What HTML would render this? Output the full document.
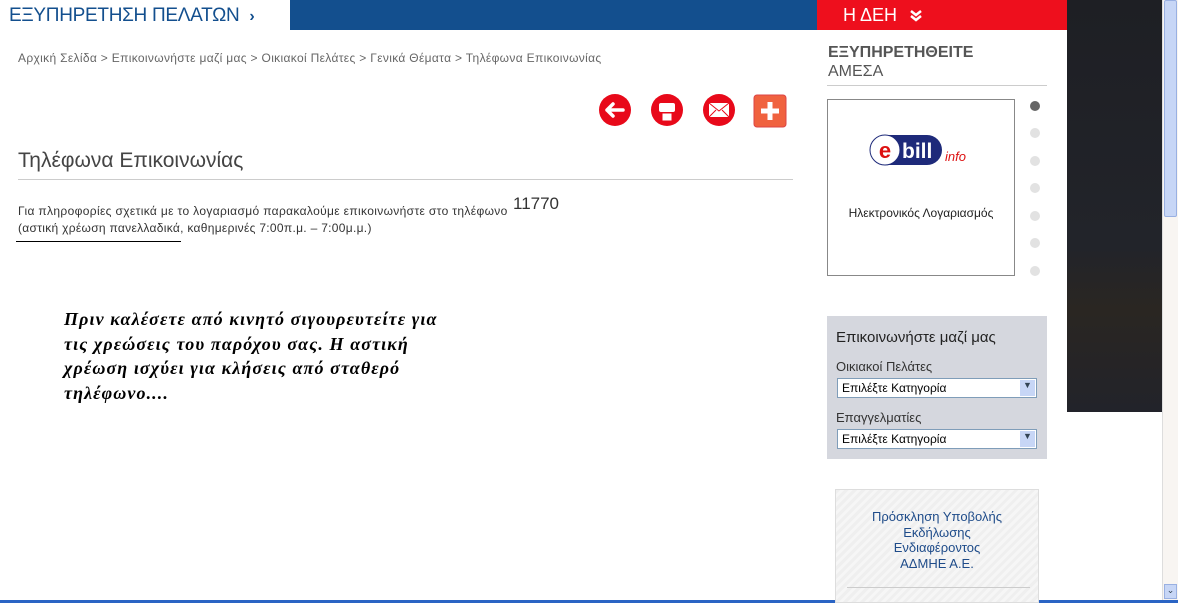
<!DOCTYPE html>
<html><head><meta charset="utf-8"><style>
*{margin:0;padding:0;box-sizing:border-box}
body{width:1178px;height:603px;overflow:hidden;background:#fff;font-family:"Liberation Sans","DejaVu Sans",sans-serif;position:relative}
.a{position:absolute;white-space:nowrap}
</style></head><body>
<div class="a" style="left:9px;top:5px;font-size:19px;color:#134f8e;letter-spacing:-0.3px">ΕΞΥΠΗΡΕΤΗΣΗ ΠΕΛΑΤΩΝ &nbsp;<b style="font-size:16px">›</b></div>
<div class="a" style="left:290px;top:0;width:527px;height:30px;background:#134f8e"></div>
<div class="a" style="left:817px;top:0;width:250px;height:30px;background:#ee0f1d"></div>
<div class="a" style="left:843px;top:5px;font-size:18px;color:#fff">Η ΔΕΗ</div>
<svg class="a" style="left:909px;top:9px" width="14" height="14"><path d="M2 2l5 4 5-4M2 7l5 4 5-4" stroke="#fff" stroke-width="2.5" fill="none"/></svg>
<div class="a" style="left:1067px;top:0;width:95px;height:412px;background:linear-gradient(180deg,#1e1f24 0%,#22242a 60%,#2a2622 75%,#22232a 100%)"></div>
<div class="a" style="left:1162px;top:0;width:16px;height:603px;background:#f8f5f2;border-left:1px solid #ddd"></div>
<div class="a" style="left:1164px;top:0;width:13px;height:217px;background:#c7d6f6;border:1px solid #99b0e2;border-radius:2px"></div>
<div class="a" style="left:1164px;top:584px;width:13px;height:15px;background:#c7d6f6;border:1px solid #99b0e2;font-size:9px;color:#345;text-align:center">⌄</div>
<div class="a" style="left:0;top:600px;width:1178px;height:3px;background:#2a64c4"></div>

<div class="a" style="left:18px;top:51px;font-size:12px;color:#666;letter-spacing:0.33px">Αρχική Σελίδα &gt; Επικοινωνήστε μαζί μας &gt; Οικιακοί Πελάτες &gt; Γενικά Θέματα &gt; Τηλέφωνα Επικοινωνίας</div>

<svg class="a" style="left:598px;top:93px" width="190" height="36">
<circle cx="17" cy="17" r="16" fill="#e8091a"/><path d="M9 17h16M9 17l6-6M9 17l6 6" stroke="#fff" stroke-width="3.5" fill="none" stroke-linecap="round"/>
<circle cx="69" cy="17" r="16" fill="#e8091a"/><rect x="61" y="10" width="16" height="9" rx="2" fill="#fff"/><rect x="64" y="20" width="10" height="8" fill="#fff" stroke="#e8091a"/>
<circle cx="121" cy="17" r="16" fill="#e8091a"/><rect x="111" y="10" width="20" height="14" fill="#fff"/><path d="M111 10l10 8 10-8M111 24l7-7M131 24l-7-7" stroke="#e8091a" fill="none"/>
<rect x="156" y="2" width="32" height="32" rx="3" fill="#f0623f" stroke="#d44"/><path d="M172 9v18M163 18h18" stroke="#fff" stroke-width="5"/>
</svg>

<div class="a" style="left:18px;top:149px;font-size:21px;color:#444">Τηλέφωνα Επικοινωνίας</div>
<div class="a" style="left:18px;top:179px;width:775px;height:1px;background:#ccc"></div>
<div class="a" style="left:18px;top:204px;font-size:12px;color:#333;letter-spacing:0.35px">Για πληροφορίες σχετικά με το λογαριασμό παρακαλούμε επικοινωνήστε στο τηλέφωνο</div>
<div class="a" style="left:513px;top:194px;font-size:17px;color:#333">11770</div>
<div class="a" style="left:18px;top:221px;font-size:12px;color:#333;letter-spacing:0.3px">(αστική χρέωση πανελλαδικά, καθημερινές 7:00π.μ. – 7:00μ.μ.)</div>
<div class="a" style="left:16px;top:241px;width:165px;height:1px;background:#000"></div>

<div class="a" style="left:64px;top:307px;font-family:'Liberation Serif',serif;font-style:italic;font-weight:bold;font-size:18px;letter-spacing:1.1px;line-height:24.5px;color:#000">Πριν καλέσετε από κινητό σιγουρευτείτε για<br>τις χρεώσεις του παρόχου σας. Η αστική<br>χρέωση ισχύει για κλήσεις από σταθερό<br>τηλέφωνο....</div>

<div class="a" style="left:828px;top:43px;font-size:16px;font-weight:bold;color:#555;line-height:19px">ΕΞΥΠΗΡΕΤΗΘΕΙΤΕ<br><span style="font-weight:normal">ΑΜΕΣΑ</span></div>
<div class="a" style="left:827px;top:85px;width:220px;height:1px;background:#ccc"></div>
<div class="a" style="left:827px;top:99px;width:188px;height:177px;border:1px solid #888"></div>
<svg class="a" style="left:868px;top:133px" width="110" height="36">
<rect x="2" y="2" width="72" height="30" rx="15" fill="#1e2a7a"/><circle cx="17" cy="17" r="15" fill="#fff" stroke="#1e2a7a"/>
<text x="17" y="25" font-size="22" font-weight="bold" fill="#d11" text-anchor="middle" font-family="Liberation Sans">e</text>
<text x="34" y="25" font-size="21" font-weight="bold" fill="#fff" font-family="Liberation Sans">bill</text>
<text x="77" y="28" font-size="13" font-style="italic" fill="#d11" font-family="Liberation Sans">info</text>
</svg>
<div class="a" style="left:828px;top:206px;width:186px;text-align:center;font-size:12px;color:#222">Ηλεκτρονικός Λογαριασμός</div>
<div class="a" style="left:1030px;top:101px;width:10px;height:10px;border-radius:50%;background:#666"></div>
<div class="a" style="left:1030px;top:128px;width:10px;height:10px;border-radius:50%;background:#e2e2e2"></div>
<div class="a" style="left:1030px;top:156px;width:10px;height:10px;border-radius:50%;background:#e2e2e2"></div>
<div class="a" style="left:1030px;top:183px;width:10px;height:10px;border-radius:50%;background:#e2e2e2"></div>
<div class="a" style="left:1030px;top:211px;width:10px;height:10px;border-radius:50%;background:#e2e2e2"></div>
<div class="a" style="left:1030px;top:238px;width:10px;height:10px;border-radius:50%;background:#e2e2e2"></div>
<div class="a" style="left:1030px;top:266px;width:10px;height:10px;border-radius:50%;background:#e2e2e2"></div>

<div class="a" style="left:827px;top:316px;width:220px;height:143px;background:#d5d7de"></div>
<div class="a" style="left:836px;top:329px;font-size:15px;color:#222">Επικοινωνήστε μαζί μας</div>
<div class="a" style="left:836px;top:359px;font-size:13px;color:#333">Οικιακοί Πελάτες</div>
<div class="a" style="left:837px;top:378px;width:200px;height:20px;background:#fff;border:1px solid #7f9db9;font-size:12px;padding:2px 4px;color:#000">Επιλέξτε Κατηγορία<span style="position:absolute;right:1px;top:1px;width:15px;height:16px;background:#c7d6f6;font-size:9px;text-align:center;color:#345">▼</span></div>
<div class="a" style="left:836px;top:410px;font-size:13px;color:#333">Επαγγελματίες</div>
<div class="a" style="left:837px;top:429px;width:200px;height:20px;background:#fff;border:1px solid #7f9db9;font-size:12px;padding:2px 4px;color:#000">Επιλέξτε Κατηγορία<span style="position:absolute;right:1px;top:1px;width:15px;height:16px;background:#c7d6f6;font-size:9px;text-align:center;color:#345">▼</span></div>

<div class="a" style="left:835px;top:489px;width:204px;height:114px;background:repeating-linear-gradient(135deg,#efefef 0 3px,#f6f6f6 3px 6px);border:1px solid #ddd"></div>
<div class="a" style="left:835px;top:509px;width:204px;text-align:center;font-size:13px;line-height:15.5px;color:#1f4c8a">Πρόσκληση Υποβολής<br>Εκδήλωσης<br>Ενδιαφέροντος<br>ΑΔΜΗΕ Α.Ε.</div>
<div class="a" style="left:847px;top:587px;width:183px;height:1px;background:#ccc"></div>
</body></html>
